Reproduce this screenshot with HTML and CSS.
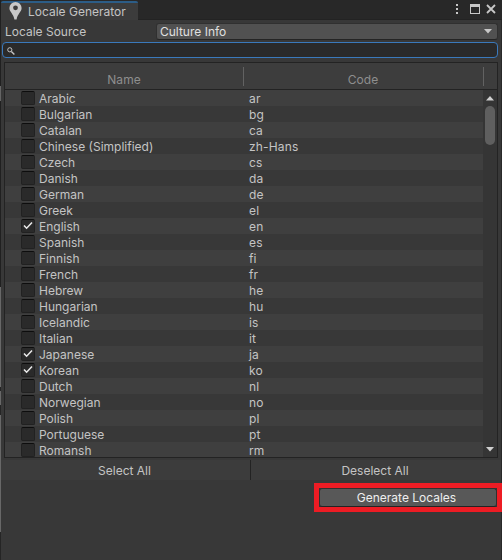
FILE: index.html
```html
<!DOCTYPE html>
<html lang="en">
<head>
<meta charset="utf-8">
<title>Locale Generator</title>
<link rel="stylesheet" href="styles.css">
</head>
<body>
<div class="window">
  <header class="titlebar">
    <div class="tab">
      <svg class="pin" width="13" height="18" viewBox="0 0 13 18"><path fill="#c8c8c8" fill-rule="evenodd" d="M6.5 0A6.1 6.1 0 0 0 .4 6.1C.4 10 4.5 12 5.4 17.5h2.2C8.5 12 12.6 10 12.6 6.1A6.1 6.1 0 0 0 6.5 0ZM6.5 3.4a2.4 2.4 0 1 1 0 4.8a2.4 2.4 0 0 1 0-4.8Z"/></svg>
      <span>Locale Generator</span>
    </div>
    <svg class="controls" width="44" height="12" viewBox="0 0 44 12"><path fill="#c8c8c8" d="M1 1h2v2H1zM1 5h2v2H1zM1 9h2v2H1zM15 1h10v10H15zM16 4v6h8V4z" fill-rule="evenodd"/><path d="m32 2 8 8m0-8-8 8" stroke="#c8c8c8" stroke-width="1.8" fill="none"/></svg>
  </header>
  <div class="source">
    <label>Locale Source</label>
    <div class="dropdown"><span>Culture Info</span><svg width="8" height="5" viewBox="0 0 8 5"><path fill="#c8c8c8" d="M0 0h8L4 4.6z"/></svg></div>
  </div>
  <div class="search"><svg width="8" height="8" viewBox="0 0 8 8" fill="none" stroke="#c4c4c4"><circle cx="2.8" cy="2.8" r="2.1"/><path d="m4.4 4.4 3 3" stroke-width="1.4"/></svg></div>
  <section class="table">
    <div class="head"><div class="col name">Name</div><div class="col code">Code</div></div>
    <div class="body">
      <div class="rows">
        <div class="row"><i class="box"></i><span>Arabic</span><b>ar</b></div>
        <div class="row"><i class="box"></i><span>Bulgarian</span><b>bg</b></div>
        <div class="row"><i class="box"></i><span>Catalan</span><b>ca</b></div>
        <div class="row"><i class="box"></i><span>Chinese (Simplified)</span><b>zh-Hans</b></div>
        <div class="row"><i class="box"></i><span>Czech</span><b>cs</b></div>
        <div class="row"><i class="box"></i><span>Danish</span><b>da</b></div>
        <div class="row"><i class="box"></i><span>German</span><b>de</b></div>
        <div class="row"><i class="box"></i><span>Greek</span><b>el</b></div>
        <div class="row"><i class="box"><svg width="12" height="11" viewBox="0 0 12 11"><path d="m2 5.5 2.6 2.7L10 2.5"/></svg></i><span>English</span><b>en</b></div>
        <div class="row"><i class="box"></i><span>Spanish</span><b>es</b></div>
        <div class="row"><i class="box"></i><span>Finnish</span><b>fi</b></div>
        <div class="row"><i class="box"></i><span>French</span><b>fr</b></div>
        <div class="row"><i class="box"></i><span>Hebrew</span><b>he</b></div>
        <div class="row"><i class="box"></i><span>Hungarian</span><b>hu</b></div>
        <div class="row"><i class="box"></i><span>Icelandic</span><b>is</b></div>
        <div class="row"><i class="box"></i><span>Italian</span><b>it</b></div>
        <div class="row"><i class="box"><svg width="12" height="11" viewBox="0 0 12 11"><path d="m2 5.5 2.6 2.7L10 2.5"/></svg></i><span>Japanese</span><b>ja</b></div>
        <div class="row"><i class="box"><svg width="12" height="11" viewBox="0 0 12 11"><path d="m2 5.5 2.6 2.7L10 2.5"/></svg></i><span>Korean</span><b>ko</b></div>
        <div class="row"><i class="box"></i><span>Dutch</span><b>nl</b></div>
        <div class="row"><i class="box"></i><span>Norwegian</span><b>no</b></div>
        <div class="row"><i class="box"></i><span>Polish</span><b>pl</b></div>
        <div class="row"><i class="box"></i><span>Portuguese</span><b>pt</b></div>
        <div class="row"><i class="box"></i><span>Romansh</span><b>rm</b></div>
      </div>
      <div class="scroll">
        <svg width="8" height="5" viewBox="0 0 8 5"><path fill="#d0d0d0" d="M0 4.6h8L4 0z"/></svg>
        <div class="thumb"></div>
        <svg class="down" width="8" height="5" viewBox="0 0 8 5"><path fill="#d0d0d0" d="M0 0h8L4 4.6z"/></svg>
      </div>
    </div>
  </section>
  <div class="select"><div>Select All</div><div>Deselect All</div></div>
  <div class="generate"><div class="button">Generate Locales</div></div>
</div>
</body>
</html>
```
FILE: styles.css
```css
* { box-sizing: border-box; }
body { margin: 0; width: 502px; height: 560px; overflow: hidden; background: #383838; color: #c4c4c4; font: 12px/16px Inter, sans-serif; }
svg { display: block; flex: none; }
.window { height: 560px; display: flex; flex-direction: column; background: linear-gradient(#292929, #292929) right / 1px 100% no-repeat; border-image: linear-gradient(#202020 0 87px, #656565 87px 102px, #202020 102px 287px, #686868 287px 387px, #252525 387px 391px, #686868 391px 405px, #252525 405px 415px, #686868 415px 531px, #252525 531px) 1; border-width: 0 0 0 1px; border-style: solid; }
.titlebar { height: 20px; flex: none; display: flex; justify-content: space-between; background: #282828; box-shadow: inset 0 -1px #232323; }
.tab { width: 137px; margin-top: 1px; height: 19px; border-top: 2px solid #2c5d87; border-radius: 2px 2px 0 0; background: #3c3c3c; display: flex; }
.pin { margin: -1px 6px 0 8px; }
.tab span { padding-top: 1px; }
.controls { margin: 3px 3px 0 0; }
.source { height: 22px; flex: none; display: flex; padding: 3px 4px 2px; }
.source label { width: 151px; padding-top: 1px; }
.dropdown { flex: 1; height: 17px; background: #515151; border: 1px solid #303030; border-bottom-color: #242424; border-radius: 3px; padding: 0 5px 0 3px; display: flex; align-items: center; justify-content: space-between; color: #e0e0e0; }
.search { height: 16px; flex: none; margin: 0 4px 0 1px; border: 1px solid #3a79bb; border-radius: 4px; background: #2a2a2a; padding: 4px; }
.table { height: 396px; flex: none; margin: 4px 4px 0 3px; border: 1px solid #232323; }
.head { height: 27px; display: flex; background: #3d3d3d; border-bottom: 1px solid #232323; color: #8e8e8e; padding-top: 4px; letter-spacing: .1px; }
.col { height: 19px; border-right: 1px solid #626262; text-align: center; padding-top: 5px; }
.name { width: 239px; }
.code { width: 240px; padding-right: 1px; }
.body { height: 367px; display: flex; overflow: hidden; }
.rows { flex: 1; }
.row { height: 16px; display: flex; background: #3f3f3f; padding-left: 16px; line-height: 18px; }
.row:nth-child(even) { background: #383838; }
.box { width: 14px; height: 14px; margin: 1px 4px 0 0; background: #2a2a2a; border: 1px solid #212121; border-top-color: #0d0d0d; border-radius: 2px; }
.box path { fill: none; stroke: #e8e8e8; stroke-width: 1.6; }
.row span { width: 210px; }
.row b { font-weight: 400; letter-spacing: .15px; }
.scroll { width: 14px; background: #353535; display: flex; flex-direction: column; align-items: center; padding: 6px 0 5px; }
.thumb { width: 10px; height: 39px; margin-top: 5px; border-radius: 5px; background: #5f5f5f; }
.down { margin-top: auto; }
.select { height: 20px; margin: 2px 1px 0 0; flex: none; display: flex; background: #3c3c3c; text-align: center; line-height: 22px; }
.select div { width: 249px; padding-right: 2px; }
.select div + div { flex: 1; border-left: 1px solid #232323; }
.generate { width: 188px; height: 29px; flex: none; align-self: flex-end; margin-top: 3px; border: 5px solid #ed1c24; }
.button { height: 19px; background: #585858; border: 1px solid #303030; border-bottom-color: #242424; border-radius: 3px; padding-right: 3px; text-align: center; color: #eee; line-height: 18px; }
```
